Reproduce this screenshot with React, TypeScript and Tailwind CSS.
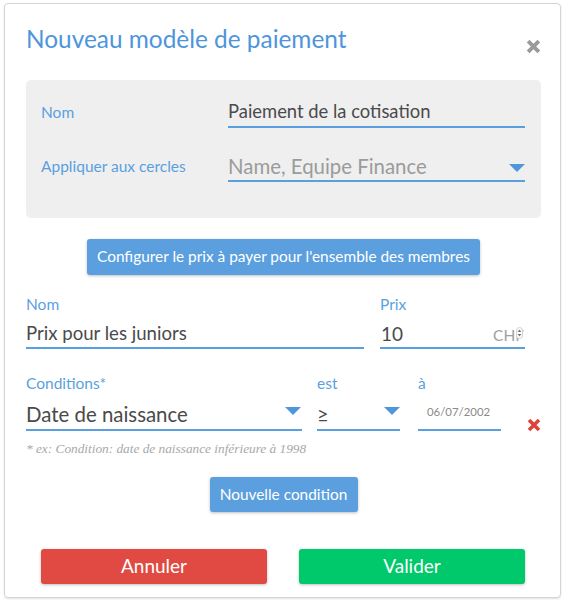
import React from "react";

const Tri = () => (
  <svg width="16" height="9" viewBox="0 0 16 9" className="shrink-0">
    <polygon points="0,0 16,0 8,8" fill="#4f97dd" />
  </svg>
);

const XIcon = ({ color, size }: { color: string; size: number }) => (
  <svg width={size} height={size} viewBox="0 0 14 14">
    <path d="M2 2 L12 12 M12 2 L2 12" stroke={color} strokeWidth="3.6" strokeLinecap="butt" />
  </svg>
);

export default function App() {
  return (
    <div className="w-[566px] h-[604px] bg-white pt-[3px] pl-[4px]" style={{ fontFamily: "Lato, 'Open Sans', sans-serif" }}>
      <div className="w-[557px] h-[595px] border border-[#d4d4d4] rounded-[4px] shadow-[0_1px_2px_rgba(0,0,0,0.12)] pl-[21px] pr-[19px] flex flex-col">
        {/* title */}
        <div className="h-[76px] flex items-start justify-between">
          <div className="mt-[20px] text-[24.4px] leading-[30px] text-[#4d95dc]">Nouveau modèle de paiement</div>
          <div className="mt-[35px]"><XIcon color="#9a9a9a" size={15} /></div>
        </div>
        {/* grey panel */}
        <div className="h-[138px] bg-[#efefef] rounded-[5px] pl-[15px] pr-[16px] pt-[18px]">
          <div className="flex items-center h-[30px]">
            <div className="w-[187px] text-[15.5px] text-[#5a9fe0]">Nom</div>
            <div className="flex-1 h-[30px] border-b-2 border-[#5a9fe0] flex items-center text-[18.4px] text-[#4a4a4a]">Paiement de la cotisation</div>
          </div>
          <div className="flex items-center h-[30px] mt-[24px]">
            <div className="w-[187px] text-[15.5px] text-[#5a9fe0]">Appliquer aux cercles</div>
            <div className="flex-1 h-[30px] border-b-2 border-[#5a9fe0] flex items-center justify-between text-[20.4px] text-[#9b9b9b]">
              <span>Name, Equipe Finance</span>
              <span className="mt-[4px]"><Tri /></span>
            </div>
          </div>
        </div>
        {/* configure button */}
        <div className="flex justify-center mt-[21px]">
          <div className="h-[36px] w-[393px] bg-[#5b9fdf] rounded-[3px] shadow-[0_1px_3px_rgba(0,0,0,0.25)] text-white text-[15.4px] flex items-center justify-center">Configurer le prix à payer pour l'ensemble des membres</div>
        </div>
        {/* nom / prix */}
        <div className="flex mt-[20px] gap-[16px]">
          <div className="w-[338px]">
            <div className="h-[20px] flex items-center text-[15.5px] text-[#5a9fe0]">Nom</div>
            <div className="mt-[4px] h-[30px] border-b-2 border-[#5a9fe0] flex items-center pt-[2px] text-[18.6px] text-[#4a4a4a]">Prix pour les juniors</div>
          </div>
          <div className="w-[145px]">
            <div className="h-[20px] flex items-center text-[15.5px] text-[#5a9fe0]">Prix</div>
            <div className="mt-[4px] h-[30px] border-b-2 border-[#5a9fe0] flex items-center justify-between pt-[2px] text-[19px] text-[#4a4a4a] relative">
              <span className="ml-[1px]">10</span>
              <span className="text-[15.5px] text-[#a0a0a0] mt-[4px] mr-[1px]">CHF</span>
              <svg className="absolute right-[2px] top-[8px]" width="7" height="12" viewBox="0 0 7 12">
                <rect x="0.5" y="0.5" width="6" height="11" rx="3" fill="white" stroke="#d0d0d0" />
                <polygon points="1.5,5 3.5,2.5 5.5,5" fill="#777" />
                <polygon points="1.5,7 3.5,9.5 5.5,7" fill="#777" />
              </svg>
            </div>
          </div>
        </div>
        {/* conditions */}
        <div className="flex mt-[25px]">
          <div className="w-[276px]">
            <div className="h-[20px] flex items-center text-[15.5px] text-[#5a9fe0]">Conditions*</div>
            <div className="mt-[5px] h-[32px] border-b-2 border-[#5a9fe0] flex items-center justify-between text-[20.4px] text-[#4a4a4a]">
              <span>Date de naissance</span>
              <span className="mr-[1px] mb-[6px]"><Tri /></span>
            </div>
          </div>
          <div className="w-[83px] ml-[15px]">
            <div className="h-[20px] flex items-center text-[15.5px] text-[#5a9fe0]">est</div>
            <div className="mt-[5px] h-[32px] border-b-2 border-[#5a9fe0] flex items-center justify-between text-[20.4px] text-[#4a4a4a]">
              <span>≥</span>
              <span className="mb-[6px]"><Tri /></span>
            </div>
          </div>
          <div className="w-[83px] ml-[18px]">
            <div className="h-[20px] flex items-center text-[15.5px] text-[#5a9fe0]">à</div>
            <div className="mt-[5px] h-[32px] border-b-2 border-[#5a9fe0] flex items-start pt-[4px] pl-[9px] text-[11.4px] text-[#8a8a8a]">06/07/2002</div>
          </div>
          <div className="ml-[26px] mt-[44px]"><XIcon color="#e0423b" size={14} /></div>
        </div>
        <div className="mt-[8px] h-[18px] flex items-center text-[13.3px] italic text-[#a8a8a8]" style={{ fontFamily: "'Liberation Serif', serif" }}>* ex: Condition: date de naissance inférieure à 1998</div>
        {/* nouvelle condition */}
        <div className="flex justify-center mt-[19px]">
          <div className="h-[35px] w-[148px] bg-[#5b9fdf] rounded-[3px] shadow-[0_1px_3px_rgba(0,0,0,0.25)] text-white text-[15.4px] flex items-center justify-center">Nouvelle condition</div>
        </div>
        {/* footer */}
        <div className="flex mt-[37px] pl-[15px] pr-[16px] gap-[32px]">
          <div className="flex-1 h-[35px] bg-[#e04a42] rounded-[3px] shadow-[0_1px_3px_rgba(0,0,0,0.25)] text-white text-[19px] flex items-center justify-center">Annuler</div>
          <div className="flex-1 h-[35px] bg-[#00c96b] rounded-[3px] shadow-[0_1px_3px_rgba(0,0,0,0.25)] text-white text-[19px] flex items-center justify-center">Valider</div>
        </div>
      </div>
    </div>
  );
}
